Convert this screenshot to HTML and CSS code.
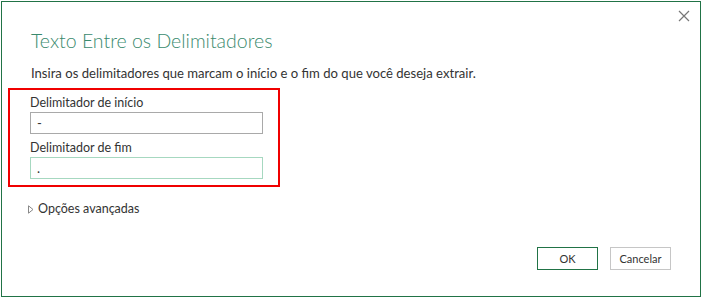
FILE: index.html
```html
<!DOCTYPE html>
<html lang="pt">
<head>
<meta charset="utf-8">
<link rel="stylesheet" href="styles.css">
</head>
<body>
<div class="dialog">
  <button class="close" aria-label="Fechar">
    <svg width="12" height="12" viewBox="0 0 12 12"><path d="M1 1 L11 11 M11 1 L1 11" stroke="#777" stroke-width="1.2" fill="none"/></svg>
  </button>
  <h1 class="title">Texto Entre os Delimitadores</h1>
  <p class="desc">Insira os delimitadores que marcam o início e o fim do que você deseja extrair.</p>
  <div class="highlight">
    <label class="label">Delimitador de início</label>
    <div class="input">-</div>
    <label class="label second">Delimitador de fim</label>
    <div class="input focused">.</div>
  </div>
  <div class="advanced">
    <svg class="tri" width="6" height="9" viewBox="0 0 6 9"><path d="M0.5 0.8 L5 4.5 L0.5 8.2 Z" fill="none" stroke="#888" stroke-width="1"/></svg>
    <span>Opções avançadas</span>
  </div>
  <div class="footer">
    <button class="btn ok">OK</button>
    <button class="btn">Cancelar</button>
  </div>
</div>
</body>
</html>
```
FILE: styles.css
```css
* { box-sizing: border-box; }
html, body { margin: 0; padding: 0; background: #fff; }
body { font-family: "Lato", "Open Sans", sans-serif; color: #333; }
.dialog {
  position: relative;
  margin: 1px;
  width: 700px;
  height: 296px;
  border: 1px solid #217346;
  padding-top: 25px;
}
.close {
  position: absolute;
  top: 8px;
  right: 10px;
  border: 0;
  background: none;
  padding: 0;
  width: 12px;
  height: 12px;
}
.close svg { display: block; }
.title {
  margin: 0 0 9px 29px;
  font-size: 19.5px;
  line-height: 28px;
  font-weight: 300;
  color: #3a8a6e;
}
.desc {
  margin: 0 0 6px 29px;
  font-size: 13.1px;
  line-height: 18px;
  color: #333;
}
.highlight {
  margin-left: 6px;
  width: 272px;
  border: 2px solid #f00000;
  padding: 4px 0 6px 20px;
}
.label {
  display: block;
  font-size: 12.5px;
  line-height: 18px;
  margin-bottom: 0;
  color: #333;
}
.label.second { margin-top: 5px; }
.input {
  width: 233px;
  height: 22px;
  border: 1px solid #a9a9a9;
  font-size: 13px;
  line-height: 20px;
  padding-left: 6px;
  color: #333;
}
.input.focused { border-color: #a6d8c0; }
.advanced {
  display: flex;
  align-items: center;
  gap: 4px;
  margin: 13px 0 0 26px;
  font-size: 12.5px;
  line-height: 18px;
}
.tri { display: block; }
.footer {
  display: flex;
  justify-content: flex-end;
  gap: 12px;
  margin: 29px 29px 0 0;
}
.btn {
  width: 61px;
  height: 23px;
  border: 1px solid #c6c6c6;
  background: #fff;
  font-family: "Lato", "Open Sans", sans-serif;
  font-size: 11px;
  color: #333;
  padding: 0;
}
.btn.ok { border-color: #217346; }
```
